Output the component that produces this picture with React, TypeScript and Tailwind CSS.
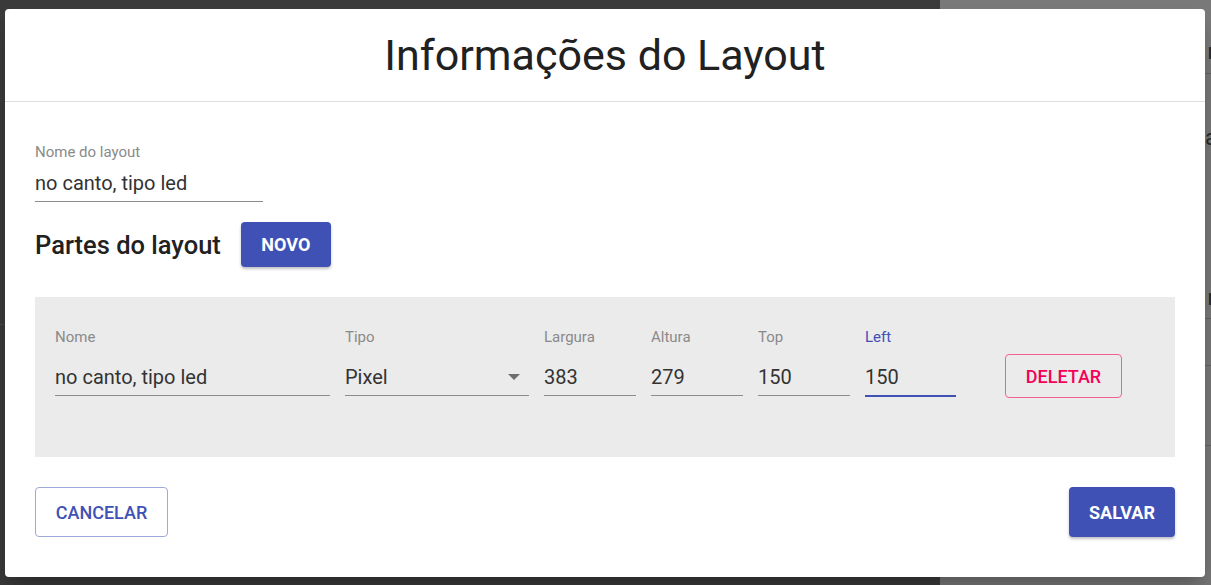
import React from 'react';

const font = { fontFamily: 'Roboto, "Liberation Sans", sans-serif' };

interface FieldProps {
  label: string;
  value: string;
  width: string;
  active?: boolean;
  select?: boolean;
}

const Field: React.FC<FieldProps> = ({ label, value, width, active, select }) => {
  return (
    <div className={`${width} flex flex-col`}>
      <span className={`text-[15px] leading-[16px] ${active ? 'text-[#3f51b5]' : 'text-[#8a8a8a]'}`}>{label}</span>
      <div
        className={`mt-[13px] flex items-center justify-between ${
          active ? 'h-[39px] border-b-2 border-[#3f51b5]' : 'h-[38px] border-b border-[#8c8c8c]'
        }`}
      >
        <span className="text-[20px] text-[#333333] leading-[24px]">{value}</span>
        {select && (
          <svg width="14" height="8" viewBox="0 0 14 8" className="mr-[8px] mt-[1px]">
            <path d="M1 1 L7 7 L13 1 Z" fill="#6e6e6e" />
          </svg>
        )}
      </div>
    </div>
  );
};

const Backdrop: React.FC = () => {
  return (
    <div className="flex h-[585px] w-full">
      <div className="flex-1 bg-[#3b3b3b] flex flex-col">
        <div className="h-[325px] border-b border-[#4a4a4a]" />
      </div>
      <div className="w-[271px] bg-[#7a7a7a] flex flex-col">
        <div className="h-[74px] border-b border-[#656565] flex items-end justify-end pb-[5px]">
          <span className="text-[22px] text-[#2a2a2a] translate-x-[4px]">r</span>
        </div>
        <div className="h-[80px] flex items-end justify-end">
          <span className="text-[22px] text-[#2a2a2a] translate-x-[6px]">a</span>
        </div>
        <div className="h-[165px] border-b border-[#656565] flex items-end justify-end pb-[4px]">
          <span className="text-[22px] text-[#2a2a2a] translate-x-[4px]">r</span>
        </div>
        <div className="h-[47px] border-b border-[#656565]" />
        <div className="h-[80px] border-b border-[#656565]" />
      </div>
    </div>
  );
};

const App: React.FC = () => {
  return (
    <div className="relative w-[1211px] h-[585px] overflow-hidden" style={font}>
      <Backdrop />
      <div className="absolute left-[5px] top-[9px] w-[1200px] h-[568px] bg-white rounded-[4px] shadow-[0_11px_15px_-7px_rgba(0,0,0,0.2),0_24px_38px_3px_rgba(0,0,0,0.14)] flex flex-col">
        <div className="h-[93px] border-b border-[#dedede] flex items-center justify-center">
          <h1 className="text-[43px] leading-[50px] text-[#212121] font-normal">Informações do Layout</h1>
        </div>

        <div className="px-[30px] pt-[42px] flex flex-col">
          <div className="w-[228px] flex flex-col">
            <span className="text-[15px] leading-[16px] text-[#8a8a8a]">Nome do layout</span>
            <div className="mt-[4px] h-[38px] border-b border-[#8c8c8c] flex items-center">
              <span className="text-[20px] text-[#333333] leading-[24px]">no canto, tipo led</span>
            </div>
          </div>

          <div className="mt-[20px] flex items-center gap-[20px]">
            <h2 className="text-[25.5px] font-medium text-[#212121] leading-[30px]">Partes do layout</h2>
            <button className="w-[90px] h-[45px] rounded-[4px] bg-[#3f51b5] text-white text-[18px] font-bold shadow-[0_2px_3px_rgba(0,0,0,0.25)]">
              NOVO
            </button>
          </div>

          <div className="mt-[30px] h-[160px] bg-[#ebebeb] px-[20px] pt-[32px] flex items-start">
            <div className="flex items-start">
              <Field label="Nome" value="no canto, tipo led" width="w-[275px]" />
              <div className="w-[15px]" />
              <Field label="Tipo" value="Pixel" width="w-[184px]" select />
              <div className="w-[15px]" />
              <Field label="Largura" value="383" width="w-[92px]" />
              <div className="w-[15px]" />
              <Field label="Altura" value="279" width="w-[92px]" />
              <div className="w-[15px]" />
              <Field label="Top" value="150" width="w-[92px]" />
              <div className="w-[15px]" />
              <Field label="Left" value="150" width="w-[91px]" active />
            </div>
            <button className="ml-[49px] mt-[25px] w-[117px] h-[44px] rounded-[4px] border border-[#f06292] text-[#f50057] text-[18px] font-medium">
              DELETAR
            </button>
          </div>

          <div className="mt-[30px] flex items-center justify-between">
            <button className="w-[133px] h-[50px] rounded-[4px] border border-[#9fa8da] text-[#3f51b5] text-[18px] font-medium">
              CANCELAR
            </button>
            <button className="w-[106px] h-[50px] rounded-[4px] bg-[#3f51b5] text-white text-[18px] font-bold shadow-[0_2px_3px_rgba(0,0,0,0.25)]">
              SALVAR
            </button>
          </div>
        </div>
      </div>
    </div>
  );
};

export default App;
